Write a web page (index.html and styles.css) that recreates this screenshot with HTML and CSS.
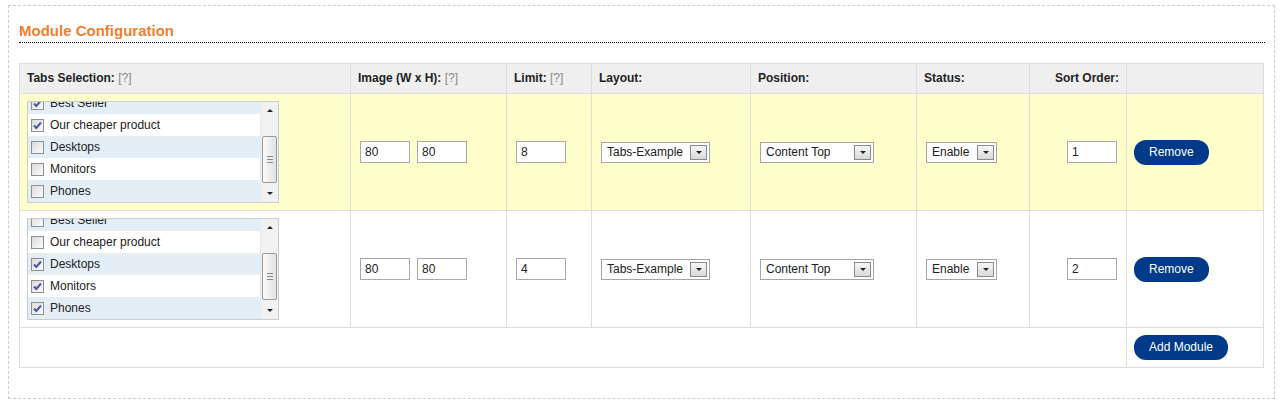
FILE: index.html
```html
<!DOCTYPE html>
<html>
<head>
<meta charset="utf-8">
<title>Module Configuration</title>
<link rel="stylesheet" href="styles.css">
</head>
<body>
<div class="panel">
  <h2 class="title">Module Configuration</h2>
  <table class="list">
    <colgroup>
      <col style="width:331px"><col style="width:156px"><col style="width:85px"><col style="width:159px"><col style="width:166px"><col style="width:113px"><col style="width:97px"><col style="width:137px">
    </colgroup>
    <thead>
      <tr>
        <th>Tabs Selection: <span class="help">[?]</span></th>
        <th>Image (W x H): <span class="help">[?]</span></th>
        <th>Limit: <span class="help">[?]</span></th>
        <th>Layout:</th>
        <th>Position:</th>
        <th>Status:</th>
        <th class="right">Sort Order:</th>
        <th></th>
      </tr>
    </thead>
    <tbody>
      <tr class="hl">
        <td>
          <div class="scrollbox">
            <div class="items">
              <div class="item odd"><span class="cb on"><svg viewBox="0 0 13 13" width="13" height="13"><path d="M3 6.5 L5.3 9 L10 3.5" fill="none" stroke="#4a56a8" stroke-width="2"/></svg></span>Best Seller</div>
              <div class="item"><span class="cb on"><svg viewBox="0 0 13 13" width="13" height="13"><path d="M3 6.5 L5.3 9 L10 3.5" fill="none" stroke="#4a56a8" stroke-width="2"/></svg></span>Our cheaper product</div>
              <div class="item odd"><span class="cb"></span>Desktops</div>
              <div class="item"><span class="cb"></span>Monitors</div>
              <div class="item odd"><span class="cb"></span>Phones</div>
            </div>
            <div class="sbar"><span class="arr"><i class="tri up"></i></span><span class="thumb"><i class="grip"></i></span><span class="arr dn"><i class="tri down"></i></span></div>
          </div>
        </td>
        <td><div class="pair"><input class="field" type="text" value="80"><input class="field" type="text" value="80"></div></td>
        <td><input class="field" type="text" value="8"></td>
        <td><span class="select w-layout"><span class="val">Tabs-Example</span><span class="btn"><i class="tri down"></i></span></span></td>
        <td><span class="select w-pos"><span class="val">Content Top</span><span class="btn"><i class="tri down"></i></span></span></td>
        <td><span class="select w-status"><span class="val">Enable</span><span class="btn"><i class="tri down"></i></span></span></td>
        <td class="right"><input class="field" type="text" value="1"></td>
        <td><a class="button">Remove</a></td>
      </tr>
      <tr>
        <td>
          <div class="scrollbox">
            <div class="items">
              <div class="item odd"><span class="cb"></span>Best Seller</div>
              <div class="item"><span class="cb"></span>Our cheaper product</div>
              <div class="item odd"><span class="cb on"><svg viewBox="0 0 13 13" width="13" height="13"><path d="M3 6.5 L5.3 9 L10 3.5" fill="none" stroke="#4a56a8" stroke-width="2"/></svg></span>Desktops</div>
              <div class="item"><span class="cb on"><svg viewBox="0 0 13 13" width="13" height="13"><path d="M3 6.5 L5.3 9 L10 3.5" fill="none" stroke="#4a56a8" stroke-width="2"/></svg></span>Monitors</div>
              <div class="item odd"><span class="cb on"><svg viewBox="0 0 13 13" width="13" height="13"><path d="M3 6.5 L5.3 9 L10 3.5" fill="none" stroke="#4a56a8" stroke-width="2"/></svg></span>Phones</div>
            </div>
            <div class="sbar"><span class="arr"><i class="tri up"></i></span><span class="thumb"><i class="grip"></i></span><span class="arr dn"><i class="tri down"></i></span></div>
          </div>
        </td>
        <td><div class="pair"><input class="field" type="text" value="80"><input class="field" type="text" value="80"></div></td>
        <td><input class="field" type="text" value="4"></td>
        <td><span class="select w-layout"><span class="val">Tabs-Example</span><span class="btn"><i class="tri down"></i></span></span></td>
        <td><span class="select w-pos"><span class="val">Content Top</span><span class="btn"><i class="tri down"></i></span></span></td>
        <td><span class="select w-status"><span class="val">Enable</span><span class="btn"><i class="tri down"></i></span></span></td>
        <td class="right"><input class="field" type="text" value="2"></td>
        <td><a class="button">Remove</a></td>
      </tr>
    </tbody>
    <tfoot>
      <tr>
        <td colspan="7"></td>
        <td><a class="button">Add Module</a></td>
      </tr>
    </tfoot>
  </table>
</div>
</body>
</html>
```

FILE: styles.css
```css
html, body {
  margin: 0;
  padding: 0;
  background: #fff;
}
body {
  font-family: "Liberation Sans", Arial, sans-serif;
  font-size: 12px;
  color: #222;
}
.panel {
  margin: 5px 6px 0 8px;
  border: 1px dashed #cccccc;
  padding: 16px 9px 30px 10px;
}
.title {
  margin: 0 0 20px 0;
  padding: 0 0 3px 0;
  font-size: 15px;
  line-height: 17px;
  font-weight: bold;
  color: #f07f30;
  border-bottom: 1px dotted #000;
}
.list {
  width: 1244px;
  table-layout: fixed;
  border-collapse: collapse;
  border-top: 1px solid #dddddd;
  border-left: 1px solid #dddddd;
}
.list th, .list td {
  border-right: 1px solid #dddddd;
  border-bottom: 1px solid #dddddd;
  padding: 7px;
  text-align: left;
  vertical-align: middle;
  line-height: 15px;
}
.list th {
  background: #efefef;
  font-weight: bold;
  color: #222;
}
.list th.right, .list td.right {
  text-align: right;
}
.help {
  font-weight: normal;
  color: #888;
}
.list tbody td {
  background: #fff;
}
.list tbody tr.hl td {
  background: #ffffcc;
}
.scrollbox {
  display: flex;
  width: 252px;
  height: 102px;
  box-sizing: border-box;
  border: 1px solid #cccccc;
  background: #fff;
  overflow: hidden;
}
.items {
  flex: 1;
  margin-top: -10px;
}
.item {
  display: flex;
  align-items: center;
  height: 22px;
  padding-left: 3px;
  background: #fff;
  color: #222;
  white-space: nowrap;
}
.item.odd {
  background: #e4eef7;
}
.cb {
  width: 13px;
  height: 13px;
  box-sizing: border-box;
  border: 1px solid #8e8f8f;
  background: linear-gradient(135deg, #dcdcdc, #fbfbfb);
  margin-right: 6px;
  display: inline-flex;
  flex: none;
  position: relative;
}
.cb svg {
  position: absolute;
  left: -1px;
  top: -1px;
}
.sbar {
  width: 17px;
  flex: none;
  display: flex;
  flex-direction: column;
  background: #f1f1f1;
  border-left: 1px solid #eaeaea;
}
.arr {
  height: 17px;
  display: flex;
  align-items: center;
  justify-content: center;
}
.arr.dn {
  margin-top: auto;
}
.thumb {
  margin: 17px 1px 0 1px;
  height: 47px;
  box-sizing: border-box;
  border: 1px solid #9a9a9a;
  border-radius: 2px;
  background: linear-gradient(to right, #fafafa, #e2e2e2);
  display: flex;
  align-items: center;
  justify-content: center;
}
.grip {
  width: 6px;
  height: 5px;
  border-top: 1px solid #888;
  border-bottom: 1px solid #888;
  position: relative;
}
.grip::after {
  content: "";
  position: absolute;
  left: 0;
  right: 0;
  top: 2px;
  border-top: 1px solid #888;
}
.tri {
  display: block;
  width: 0;
  height: 0;
  border-left: 3px solid transparent;
  border-right: 3px solid transparent;
}
.tri.up {
  border-bottom: 3px solid #222;
}
.tri.down {
  border-top: 3px solid #222;
}
.pair {
  display: flex;
  gap: 5px;
}
.field {
  width: 50px;
  height: 22px;
  box-sizing: border-box;
  margin: 0 2px;
  border: 1px solid #a9a9a9;
  background: #fff;
  padding: 0 4px;
  font-family: "Liberation Sans", Arial, sans-serif;
  font-size: 12px;
  color: #222;
  vertical-align: middle;
  outline: none;
}
.pair .field {
  margin: 0 0 0 2px;
}
.select {
  display: inline-flex;
  align-items: center;
  height: 21px;
  box-sizing: border-box;
  border: 1px solid #a5a5a5;
  background: #fff;
  margin-left: 2px;
  padding-left: 5px;
  vertical-align: middle;
  color: #222;
  white-space: nowrap;
}
.select .val {
  flex: 1;
}
.select .btn {
  width: 17px;
  height: 15px;
  box-sizing: border-box;
  border: 1px solid #8a8a8a;
  background: linear-gradient(#f7f7f7, #d8d8d8);
  margin-right: 2px;
  display: flex;
  align-items: center;
  justify-content: center;
}
.w-layout { width: 109px; }
.w-pos { width: 114px; }
.w-status { width: 71px; }
.button {
  display: inline-block;
  padding: 5px 15px;
  background: #003a88;
  border-radius: 12px;
  color: #fff;
  font-size: 12px;
  line-height: 15px;
  text-decoration: none;
  vertical-align: middle;
}
```
